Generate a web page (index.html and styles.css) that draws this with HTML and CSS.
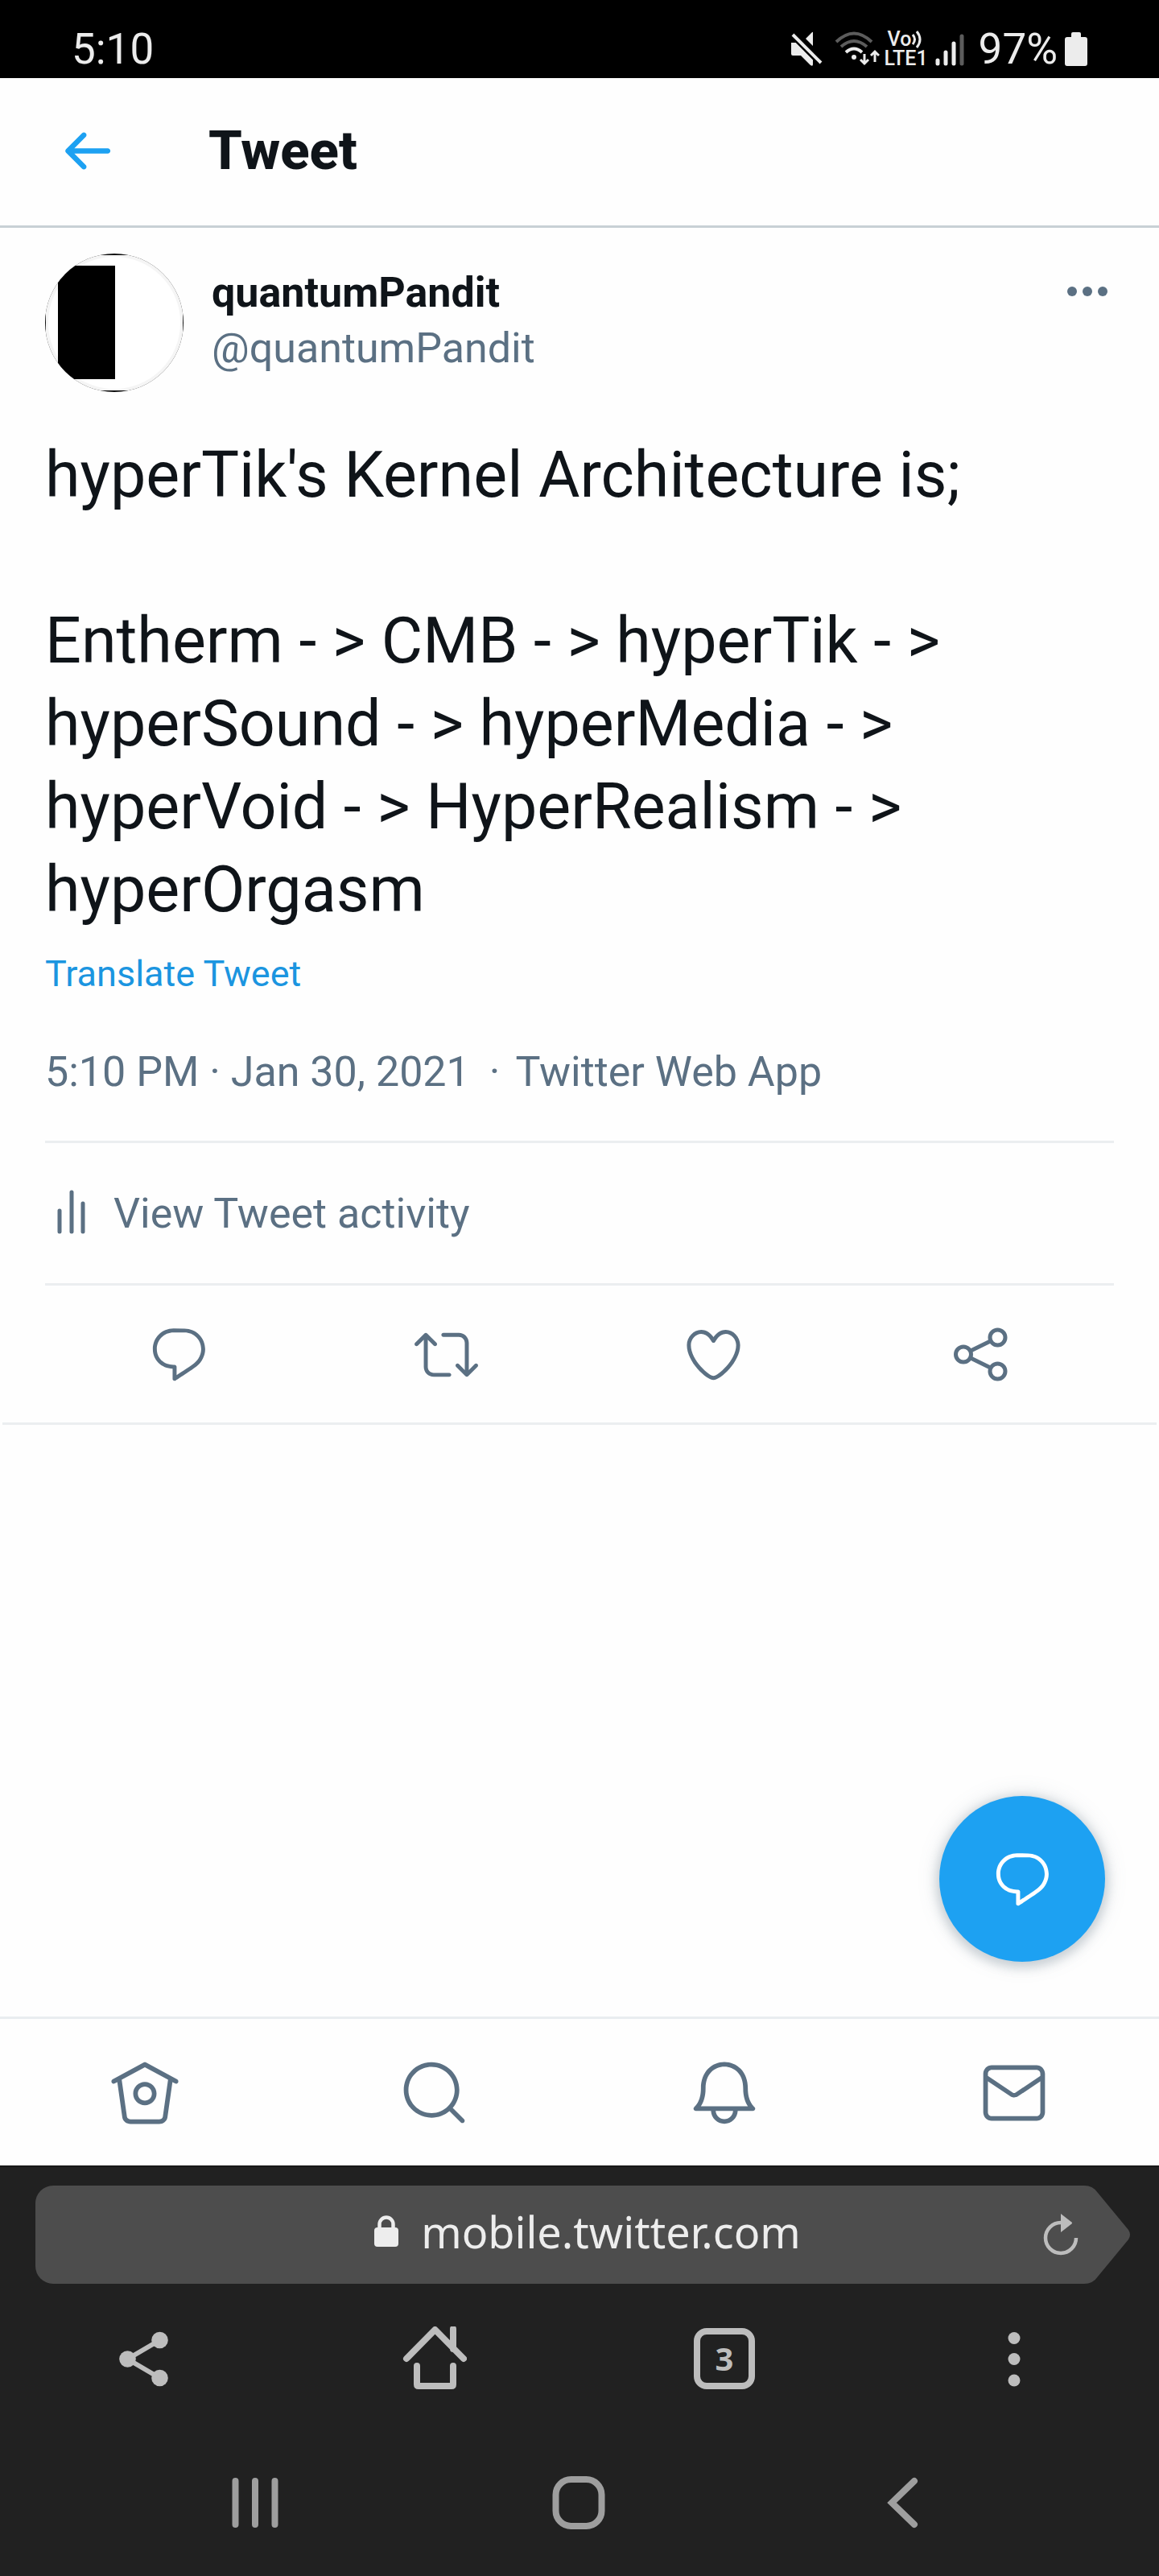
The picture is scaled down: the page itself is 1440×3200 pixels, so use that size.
FILE: index.html
```html
<!DOCTYPE html>
<html lang="en">
<head>
<meta charset="utf-8">
<meta name="viewport" content="width=device-width, initial-scale=1">
<title>Tweet</title>
<link rel="stylesheet" href="styles.css">
</head>
<body>
<div class="status-bar">
  <span class="status-text">5:10</span>
  <div class="status-icons">
    <svg class="icon-mute" viewBox="0 0 40 44" fill="#ececec"><path d="M1 14h8L28 35v6q0 3-3 1L13 30H3q-2 0-2-2zM28 1v17l-9-9 7-7q2-2 2-1z"/><path d="M3 4l35 35" stroke="#000" stroke-width="9"/><path d="M3 4l35 35" stroke="#ececec" stroke-width="4"/></svg>
    <svg class="icon-wifi" viewBox="0 0 56 44" fill="none" stroke-width="4"><path d="M2 13q22-21 44 0M8 19q16-14 32 0" stroke="#5c5c5c"/><path d="M14 26q10-9 20 0" stroke="#ececec"/><circle cx="24" cy="32" r="3" fill="#ececec"/><path d="M37 28v12M32 35l5 5 5-5M50 38V26M45 30l5-5 5 5" stroke="#ececec" stroke-width="3"/></svg>
    <div class="volte">
      <span class="volte-top">Vo<svg class="icon-waves" viewBox="0 0 14 22" fill="none" stroke="#ececec" stroke-width="3"><path d="M2 5q5 6 0 12M7 1q8 10 0 20"/></svg></span>
      <span>LTE1</span>
    </div>
    <svg class="icon-signal" viewBox="0 0 36 44" stroke-width="5" stroke-linecap="round"><path d="M3 36v4M13 26v14M23 15v25" stroke="#ececec"/><path d="M33 6v34" stroke="#5c5c5c"/></svg>
    <span class="status-text battery-text">97%</span>
    <svg class="icon-battery" viewBox="0 0 28 44" fill="#ececec"><path d="M8 7V3q0-2 2-2h8q2 0 2 2v4h5q3 0 3 3v30q0 3-3 3H3q-3 0-3-3V10q0-3 3-3z"/></svg>
  </div>
</div>

<header class="header">
  <a class="back" href="#" aria-label="Back"><svg class="icon" viewBox="0 0 24 24"><path d="M20 11H7.414l4.293-4.293c.39-.39.39-1.023 0-1.414s-1.023-.39-1.414 0l-6 6c-.39.39-.39 1.023 0 1.414l6 6c.195.195.45.293.707.293s.512-.098.707-.293c.39-.39.39-1.023 0-1.414L7.414 13H20c.553 0 1-.447 1-1s-.447-1-1-1z"/></svg></a>
  <h1 class="title">Tweet</h1>
</header>

<main class="main">
  <article class="tweet">
    <div class="author">
      <svg class="avatar" viewBox="0 0 172 172" role="img" aria-label="quantumPandit">
        <defs><clipPath id="round"><circle cx="86" cy="86" r="86"/></clipPath></defs>
        <g clip-path="url(#round)">
          <rect width="172" height="172" fill="#111"/>
          <rect x="1" y="2" width="170" height="168" fill="#fff"/>
          <rect x="16" y="15" width="71" height="141"/>
          <circle cx="86" cy="86" r="84" fill="none" stroke="#000" stroke-opacity=".04" stroke-width="4"/>
        </g>
      </svg>
      <div class="names">
        <a class="name" href="#">quantumPandit</a>
        <a class="handle" href="#">@quantumPandit</a>
      </div>
      <button class="more" aria-label="More"><svg class="icon-more" viewBox="0 0 66 66"><circle cx="14" cy="33" r="6"/><circle cx="33" cy="33" r="6"/><circle cx="52" cy="33" r="6"/></svg></button>
    </div>
    <p class="text">hyperTik's Kernel Architecture is;

Entherm - &gt; CMB - &gt; hyperTik - &gt;
hyperSound - &gt; hyperMedia - &gt;
hyperVoid - &gt; HyperRealism - &gt;
hyperOrgasm</p>
    <button class="translate">Translate Tweet</button>
    <p class="meta"><time>5:10 PM · Jan 30, 2021</time><span class="dot">·</span><a href="#">Twitter Web App</a></p>
    <a class="activity" href="#">
      <svg class="icon-bars" viewBox="0 0 66 66" fill="none" stroke="#5b7083" stroke-width="5" stroke-linecap="round"><path d="M18 30v26M33 7v49M47 21v35"/></svg>
      <span>View Tweet activity</span>
    </a>
    <div class="actions">
      <button aria-label="Reply"><svg class="icon" viewBox="0 0 24 24"><path d="M14.046 2.242l-4.148-.01h-.002c-4.374 0-7.8 3.427-7.8 7.802 0 4.098 3.186 7.206 7.465 7.37v3.828c0 .108.044.286.12.403.142.225.384.347.632.347.138 0 .277-.038.402-.118.264-.168 6.473-4.14 8.088-5.506 1.902-1.61 3.04-3.97 3.043-6.312v-.017c-.006-4.367-3.43-7.787-7.8-7.788zm3.787 12.972c-1.134.96-4.862 3.405-6.772 4.643V16.67c0-.414-.335-.75-.75-.75h-.396c-3.66 0-6.318-2.476-6.318-5.886 0-3.534 2.768-6.302 6.3-6.302l4.147.01h.002c3.532 0 6.3 2.766 6.302 6.296-.003 1.91-.942 3.844-2.514 5.176z"/></svg></button>
      <button aria-label="Retweet"><svg class="icon" viewBox="0 0 24 24"><path d="M23.77 15.67c-.292-.293-.767-.293-1.06 0l-2.22 2.22V7.65c0-2.068-1.683-3.75-3.75-3.75h-5.85c-.414 0-.75.336-.75.75s.336.75.75.75h5.85c1.24 0 2.25 1.01 2.25 2.25v10.24l-2.22-2.22c-.293-.293-.768-.293-1.06 0s-.294.768 0 1.06l3.5 3.5c.145.147.337.22.53.22s.383-.072.53-.22l3.5-3.5c.294-.292.294-.767 0-1.06zm-10.66 3.28H7.26c-1.24 0-2.25-1.01-2.25-2.25V6.46l2.22 2.22c.148.147.34.22.532.22s.384-.073.53-.22c.293-.293.293-.768 0-1.06l-3.5-3.5c-.293-.294-.768-.294-1.06 0l-3.5 3.5c-.294.292-.294.767 0 1.06s.767.293 1.06 0l2.22-2.22V16.7c0 2.068 1.683 3.75 3.75 3.75h5.85c.414 0 .75-.336.75-.75s-.337-.75-.75-.75z"/></svg></button>
      <button aria-label="Like"><svg class="icon" viewBox="0 0 24 24"><path d="M12 21.638h-.014C9.403 21.59 1.95 14.856 1.95 8.478c0-3.064 2.525-5.754 5.403-5.754 2.29 0 3.83 1.58 4.646 2.73.814-1.148 2.354-2.73 4.645-2.73 2.88 0 5.404 2.69 5.404 5.755 0 6.376-7.454 13.11-10.037 13.157H12zM7.354 4.225c-2.08 0-3.903 1.988-3.903 4.255 0 5.74 7.034 11.596 8.55 11.658 1.518-.062 8.55-5.917 8.55-11.658 0-2.267-1.823-4.255-3.903-4.255-2.528 0-3.94 2.936-3.952 2.965-.23.562-1.156.562-1.387 0-.014-.03-1.425-2.965-3.954-2.965z"/></svg></button>
      <button aria-label="Share"><svg class="icon" viewBox="0 0 79 79"><g fill="none" stroke="#5b7083" stroke-width="5"><circle cx="18" cy="39.5" r="9.5"/><circle cx="60.5" cy="18.5" r="9.5"/><circle cx="60.5" cy="60.5" r="9.5"/><path d="M26.500 35.300l25.500-12.600M26.500 43.700l25.500 12.600"/></g></svg></button>
    </div>
  </article>
  <button class="compose" aria-label="Reply"><svg class="icon" viewBox="0 0 24 24"><path d="M14.046 2.242l-4.148-.01h-.002c-4.374 0-7.8 3.427-7.8 7.802 0 4.098 3.186 7.206 7.465 7.37v3.828c0 .108.044.286.12.403.142.225.384.347.632.347.138 0 .277-.038.402-.118.264-.168 6.473-4.14 8.088-5.506 1.902-1.61 3.04-3.97 3.043-6.312v-.017c-.006-4.367-3.43-7.787-7.8-7.788zm3.787 12.972c-1.134.96-4.862 3.405-6.772 4.643V16.67c0-.414-.335-.75-.75-.75h-.396c-3.66 0-6.318-2.476-6.318-5.886 0-3.534 2.768-6.302 6.3-6.302l4.147.01h.002c3.532 0 6.3 2.766 6.302 6.296-.003 1.91-.942 3.844-2.514 5.176z"/></svg></button>
</main>

<nav class="tabs">
  <a href="#" aria-label="Home"><svg class="icon-tab" viewBox="0 0 24 24"><path d="M22.46 7.57L12.357 2.115c-.223-.12-.49-.12-.713 0L1.543 7.57c-.364.197-.5.652-.303 1.017.135.25.394.393.66.393.12 0 .243-.03.356-.09l.815-.44L4.7 19.963c.214 1.215 1.308 2.062 2.658 2.062h9.282c1.352 0 2.445-.848 2.663-2.087l1.626-11.49.818.442c.364.193.82.06 1.017-.304.196-.363.06-.818-.304-1.016zm-4.638 12.133c-.107.606-.703.822-1.18.822H7.36c-.48 0-1.075-.216-1.178-.798L4.48 7.69 12 3.628l7.522 4.06-1.7 12.015z"/><path d="M8.22 12.184c0 2.084 1.695 3.78 3.78 3.78s3.78-1.696 3.78-3.78-1.695-3.78-3.78-3.78-3.78 1.696-3.78 3.78zm6.06 0c0 1.258-1.022 2.28-2.28 2.28s-2.28-1.022-2.28-2.28 1.022-2.28 2.28-2.28 2.28 1.022 2.28 2.28z"/></svg></a>
  <a href="#" aria-label="Search"><svg class="icon-tab" viewBox="0 0 24 24"><path d="M21.53 20.47l-3.66-3.66C19.195 15.24 20 13.214 20 11c0-4.97-4.03-9-9-9s-9 4.03-9 9 4.03 9 9 9c2.215 0 4.24-.804 5.808-2.13l3.66 3.66c.147.146.34.22.53.22s.385-.073.53-.22c.295-.293.295-.767.002-1.06zM3.5 11c0-4.135 3.365-7.5 7.5-7.5s7.5 3.365 7.500 7.500-3.365 7.500-7.500 7.500-7.500-3.365-7.500-7.500z"/></svg></a>
  <a href="#" aria-label="Notifications"><svg class="icon-tab" viewBox="0 0 24 24"><path d="M21.697 16.468c-.02-.016-2.14-1.64-2.103-6.03.02-2.532-.812-4.782-2.347-6.335C15.872 2.71 14.01 1.94 12.005 1.93h-.013c-2.004.01-3.866.78-5.242 2.174-1.534 1.553-2.368 3.802-2.346 6.334.037 4.33-2.02 5.967-2.102 6.03-.26.193-.366.53-.265.838.102.308.39.515.712.515h4.92c.102 2.31 1.997 4.16 4.33 4.16s4.226-1.85 4.327-4.16h4.922c.322 0 .61-.206.71-.514.103-.307-.003-.645-.263-.838zM12 20.478c-1.505 0-2.73-1.177-2.828-2.658h5.656c-.1 1.48-1.323 2.66-2.828 2.66zM4.38 16.32c.74-1.132 1.548-3.028 1.524-5.896-.018-2.16.644-3.982 1.913-5.267C8.91 4.05 10.397 3.437 12 3.43c1.603.008 3.087.62 4.18 1.728 1.27 1.285 1.933 3.106 1.915 5.267-.024 2.868.785 4.765 1.525 5.896H4.38z"/></svg></a>
  <a href="#" aria-label="Messages"><svg class="icon-tab" viewBox="0 0 24 24"><path d="M19.25 3.018H4.75C3.233 3.018 2 4.252 2 5.77v12.495c0 1.518 1.233 2.753 2.75 2.753h14.5c1.517 0 2.75-1.235 2.75-2.753V5.77c0-1.518-1.233-2.752-2.75-2.752zm-14.5 1.5h14.5c.69 0 1.25.56 1.25 1.25v.714l-8.05 5.367c-.273.18-.626.182-.9-.002L3.5 6.482v-.714c0-.69.56-1.25 1.25-1.25zm14.5 14.998H4.75c-.69 0-1.25-.56-1.25-1.25V8.24l7.24 4.83c.383.256.822.384 1.26.384.44 0 .877-.128 1.26-.383l7.24-4.83v10.022c0 .69-.56 1.25-1.25 1.25z"/></svg></a>
</nav>

<footer class="browser">
  <div class="omnibox">
    <button class="address">
      <svg class="icon-lock" viewBox="0 0 30 40"><rect y="15" width="30" height="24" rx="4" fill="#ededed"/><path d="M6.500 17v-6a8.500 8.500 0 0 1 17 0v6" fill="none" stroke="#ededed" stroke-width="4.500"/></svg>
      <span>mobile.twitter.com</span>
    </button>
    <button class="reload" aria-label="Reload"><svg class="icon-reload" viewBox="0 0 44 52"><path d="M22 11a19 19 0 1 0 19 19" fill="none" stroke="#bdbdbd" stroke-width="4.500"/><path d="M22 0v23l13.500-10.500q1-1 0-2z" fill="#bdbdbd"/></svg></button>
    <svg class="cap" viewBox="0 0 60 122"><path d="M0 0h3q11 0 17 9l38 46q4 6 0 12l-38 46q-6 9-17 9H0z" fill="#4d4d4d"/></svg>
  </div>
  <div class="toolbar">
    <button aria-label="Share"><svg class="icon-tool" viewBox="0 0 80 80"><g fill="#bdbdbd"><circle cx="18.500" cy="40.500" r="10.300"/><circle cx="58.500" cy="17" r="10.300"/><circle cx="58.500" cy="64" r="10.300"/></g><path d="M58.500 17l-40 23.500 40 23.500" fill="none" stroke="#bdbdbd" stroke-width="6"/></svg></button>
    <button aria-label="Home page"><svg class="icon-tool" viewBox="0 0 80 80" fill="none" stroke="#bdbdbd" stroke-width="8" stroke-linecap="round" stroke-linejoin="round"><path d="M5 40L40.500 4 76 40M63 3v25M18 49v23q0 2 2 2h41q2 0 2-2V49"/></svg></button>
    <button class="tab-count" aria-label="3 open tabs">3</button>
    <button aria-label="Menu"><svg class="icon-tool" viewBox="0 0 80 80" fill="#bdbdbd"><circle cx="40" cy="14.500" r="7.500"/><circle cx="40" cy="40.500" r="7.500"/><circle cx="40" cy="67" r="7.500"/></svg></button>
  </div>
  <div class="system-nav">
    <button aria-label="Recent apps"><svg class="icon-tool" viewBox="0 0 80 80" stroke="#9e9e9e" stroke-width="8" stroke-linecap="round"><path d="M15.500 13v54M40 13v54M64.500 13v54"/></svg></button>
    <button aria-label="Home screen"><svg class="icon-tool" viewBox="0 0 80 80" fill="none" stroke="#9e9e9e" stroke-width="8"><rect x="11.500" y="11" width="57" height="58" rx="19"/></svg></button>
    <button aria-label="Back"><svg class="icon-tool" viewBox="0 0 80 80" fill="none" stroke="#9e9e9e" stroke-width="8" stroke-linecap="round"><path d="M55 13L27 40l28 27"/></svg></button>
  </div>
</footer>
</body>
</html>
```
FILE: styles.css
```css
* {
  box-sizing: border-box;
}

body {
  margin: 0;
  min-height: 100vh;
  display: flex;
  flex-direction: column;
  background: #fefefe;
  color: #0f1419;
  font-family: Roboto, sans-serif;
  font-size: 52px;
  line-height: 69px;
}

h1,
p {
  margin: 0;
}

a {
  color: inherit;
  text-decoration: none;
}

button {
  margin: 0;
  padding: 0;
  border: 0;
  background: none;
  color: inherit;
  font: inherit;
  cursor: pointer;
}

svg {
  display: block;
  flex: none;
}

.icon {
  width: 79px;
  height: 79px;
  fill: currentColor;
}

/* Phone status bar */

.status-bar {
  display: flex;
  align-items: center;
  justify-content: space-between;
  height: 97px;
  padding: 25px 89px 0 89px;
  background: #000;
  color: #ececec;
}

.status-text {
  font-size: 53px;
}

.status-icons {
  display: flex;
  align-items: center;
}

.icon-mute {
  width: 40px;
  height: 44px;
}

.icon-wifi {
  width: 56px;
  height: 44px;
  margin-left: 15px;
}

.volte {
  display: flex;
  flex-direction: column;
  margin-left: 6px;
  font-size: 25px;
  font-weight: 500;
  line-height: 24px;
}

.volte-top {
  display: flex;
  align-items: center;
  padding-left: 4px;
}

.icon-waves {
  width: 14px;
  height: 22px;
}

.icon-signal {
  width: 36px;
  height: 44px;
  margin-left: 9px;
}

.battery-text {
  margin-left: 18px;
}

.icon-battery {
  width: 28px;
  height: 44px;
  margin-left: 9px;
}

/* Page header */

.header {
  display: flex;
  align-items: center;
  gap: 112px;
  height: 186px;
  padding: 0 68px 3px;
  border-bottom: 3px solid #c8d0d5;
}

.back {
  color: #1da1f2;
}

.title {
  font-size: 67px;
  font-weight: 800;
  line-height: 87px;
}

/* Tweet */

.main {
  position: relative;
  flex: 1;
}

.tweet {
  margin: 0 3px;
  padding: 32px 53px 0;
  border-bottom: 3px solid #ebeef0;
}

.author {
  display: flex;
  align-items: flex-start;
  gap: 35px;
}

.avatar {
  width: 172px;
  height: 172px;
}

.names {
  display: flex;
  flex: 1;
  flex-direction: column;
  padding-top: 14px;
}

.name {
  font-weight: 700;
}

.handle,
.more,
.meta,
.activity,
.actions {
  color: #5b7083;
}

.more {
  padding-top: 14px;
}

.icon-more {
  width: 66px;
  height: 66px;
  fill: currentColor;
}

.text {
  margin-top: 52px;
  font-size: 79px;
  line-height: 103px;
  white-space: pre-wrap;
}

.translate {
  display: block;
  margin-top: 23px;
  color: #1b95e0;
  font-size: 45px;
  line-height: 60px;
}

.meta {
  padding: 57px 0 51px;
  border-bottom: 3px solid #ebeef0;
}

.dot {
  padding: 0 19px 0 24px;
}

.activity {
  display: flex;
  align-items: center;
  gap: 19px;
  height: 177px;
  border-bottom: 3px solid #ebeef0;
}

.icon-bars {
  width: 66px;
  height: 66px;
}

.actions {
  display: grid;
  grid-template-columns: repeat(4, 1fr);
  justify-items: center;
  align-items: center;
  height: 170px;
}

.compose {
  position: absolute;
  right: 67px;
  bottom: 68px;
  display: flex;
  align-items: center;
  justify-content: center;
  width: 206px;
  height: 206px;
  border-radius: 50%;
  background: #1da1f2;
  color: #fff;
  box-shadow: 0 0 28px rgba(101, 119, 134, 0.2), 0 4px 12px 4px rgba(101, 119, 134, 0.25);
}

/* Site tabs */

.tabs {
  display: grid;
  grid-template-columns: repeat(4, 1fr);
  justify-items: center;
  align-items: center;
  height: 185px;
  padding-top: 2px;
  border-top: 3px solid #e9edf0;
  color: #5b7083;
}

.icon-tab {
  width: 92px;
  height: 92px;
  fill: currentColor;
}

/* Browser and system controls */

.browser {
  border-top: 2px solid #181818;
  background: #212121;
}

.omnibox {
  display: flex;
  padding: 23px 36px 0 44px;
}

.address {
  display: flex;
  flex: 1;
  align-items: center;
  justify-content: center;
  gap: 28px;
  padding: 0 0 8px 124px;
  border-radius: 22px 0 0 22px;
  background: #4d4d4d;
  color: #ededed;
  font-family: "Noto Sans", sans-serif;
  font-size: 54px;
}

.icon-lock {
  width: 30px;
  height: 40px;
}

.reload {
  padding: 0 4px;
  background: #4d4d4d;
}

.icon-reload {
  width: 44px;
  height: 52px;
}

.cap {
  width: 60px;
  height: 122px;
}

.toolbar {
  display: grid;
  grid-template-columns: repeat(4, 1fr);
  justify-items: center;
  align-items: center;
  height: 186px;
}

.icon-tool {
  width: 80px;
  height: 80px;
}

.tab-count {
  width: 76px;
  height: 76px;
  border: 8px solid #bdbdbd;
  border-radius: 16px;
  color: #bdbdbd;
  font-family: "Noto Sans", sans-serif;
  font-size: 40px;
  font-weight: 700;
  line-height: 60px;
}

.system-nav {
  display: grid;
  grid-template-columns: repeat(3, 1fr);
  justify-items: center;
  align-items: center;
  height: 177px;
  padding: 0 118px 5px 116px;
}
```
